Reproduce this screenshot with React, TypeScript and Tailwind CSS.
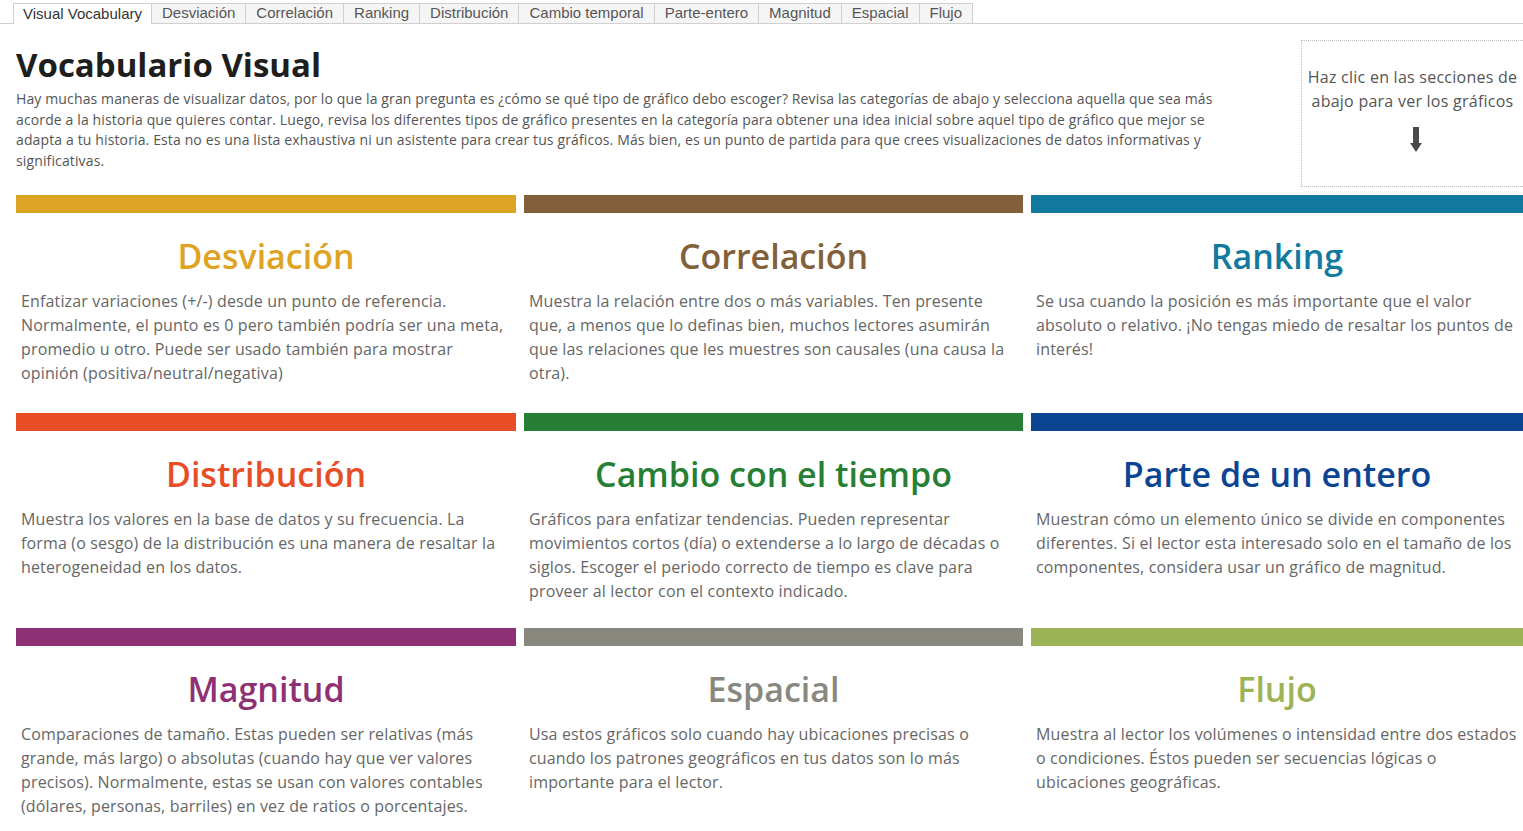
const tabs = [
  'Visual Vocabulary',
  'Desviación',
  'Correlación',
  'Ranking',
  'Distribución',
  'Cambio temporal',
  'Parte-entero',
  'Magnitud',
  'Espacial',
  'Flujo',
];

type Category = {
  title: string;
  bar: string;
  text: string;
  body: string;
};

const categories: Category[] = [
  {
    title: 'Desviación',
    bar: 'bg-[#dfa323]',
    text: 'text-[#dfa323]',
    body: 'Enfatizar variaciones (+/-) desde un punto de referencia. Normalmente, el punto es 0 pero también podría ser una meta, promedio u otro. Puede ser usado también para mostrar opinión (positiva/neutral/negativa)',
  },
  {
    title: 'Correlación',
    bar: 'bg-[#826039]',
    text: 'text-[#826039]',
    body: 'Muestra la relación entre dos o más variables. Ten presente que, a menos que lo definas bien, muchos lectores asumirán que las relaciones que les muestres son causales (una causa la otra).',
  },
  {
    title: 'Ranking',
    bar: 'bg-[#117a9e]',
    text: 'text-[#117a9e]',
    body: 'Se usa cuando la posición es más importante que el valor absoluto o relativo. ¡No tengas miedo de resaltar los puntos de interés!',
  },
  {
    title: 'Distribución',
    bar: 'bg-[#e84e26]',
    text: 'text-[#e84e26]',
    body: 'Muestra los valores en la base de datos y su frecuencia. La forma (o sesgo) de la distribución es una manera de resaltar la heterogeneidad en los datos.',
  },
  {
    title: 'Cambio con el tiempo',
    bar: 'bg-[#267f34]',
    text: 'text-[#267f34]',
    body: 'Gráficos para enfatizar tendencias. Pueden representar movimientos cortos (día) o extenderse a lo largo de décadas o siglos. Escoger el periodo correcto de tiempo es clave para proveer al lector con el contexto indicado.',
  },
  {
    title: 'Parte de un entero',
    bar: 'bg-[#0b4592]',
    text: 'text-[#0b4592]',
    body: 'Muestran cómo un elemento único se divide en componentes diferentes. Si el lector esta interesado solo en el tamaño de los componentes, considera usar un gráfico de magnitud.',
  },
  {
    title: 'Magnitud',
    bar: 'bg-[#8e3174]',
    text: 'text-[#8e3174]',
    body: 'Comparaciones de tamaño. Estas pueden ser relativas (más grande, más largo) o absolutas (cuando hay que ver valores precisos). Normalmente, estas se usan con valores contables (dólares, personas, barriles) en vez de ratios o porcentajes.',
  },
  {
    title: 'Espacial',
    bar: 'bg-[#88887e]',
    text: 'text-[#88887e]',
    body: 'Usa estos gráficos solo cuando hay ubicaciones precisas o cuando los patrones geográficos en tus datos son lo más importante para el lector.',
  },
  {
    title: 'Flujo',
    bar: 'bg-[#9cb356]',
    text: 'text-[#9cb356]',
    body: 'Muestra al lector los volúmenes o intensidad entre dos estados o condiciones. Éstos pueden ser secuencias lógicas o ubicaciones geográficas.',
  },
];

function DownArrow() {
  return (
    <svg width="12" height="26" viewBox="0 0 12 26" className="fill-[#4a4a4a]">
      <rect x="3" y="0" width="6" height="17" />
      <polygon points="0,16 12,16 6,25" />
    </svg>
  );
}

export default function App() {
  return (
    <div className="w-[1523px] h-[831px] overflow-hidden bg-white font-['Open_Sans',sans-serif]">
      <div className="mt-[3px] h-[21px] flex pl-[13px] border-b border-[#d0d0d0] font-['Liberation_Sans',Arial,sans-serif] text-[15px]">
        {tabs.map((tab, i) => (
          <div
            key={tab}
            className={
              i === 0
                ? 'px-[9px] h-[21px] flex items-center bg-white border-t border-l border-r border-[#d0d0d0] text-[#333] -mb-px'
                : 'px-[10px] h-[20px] flex items-center bg-[#f5f5f5] border-t border-r border-[#d0d0d0] text-[#555]'
            }
          >
            {tab}
          </div>
        ))}
      </div>

      <div className="flex pl-[16px] mt-[16px]">
        <div className="w-[1206px] pt-[5px]">
          <h1 className="text-[33px] leading-[40px] font-bold text-[#1e1e1e]">Vocabulario Visual</h1>
          <p className="text-[14px] leading-[20.7px] tracking-[0.13px] text-[#555] mt-[4px]">
            Hay muchas maneras de visualizar datos, por lo que la gran pregunta es ¿cómo se qué tipo de gráfico debo
            escoger? Revisa las categorías de abajo y selecciona aquella que sea más acorde a la historia que quieres
            contar. Luego, revisa los diferentes tipos de gráfico presentes en la categoría para obtener una idea
            inicial sobre aquel tipo de gráfico que mejor se adapta a tu historia. Esta no es una lista exhaustiva ni
            un asistente para crear tus gráficos. Más bien, es un punto de partida para que crees visualizaciones de
            datos informativas y significativas.
          </p>
        </div>
        <div className="ml-auto w-[222px] h-[147px] border border-dotted border-[#bdbdbd] border-r-0 flex flex-col items-center pt-[24px]">
          <p className="text-[16px] leading-[24px] tracking-[0.25px] text-[#555] text-center">
            Haz clic en las secciones de
            <br />
            abajo para ver los gráficos
          </p>
          <div className="mt-[14px] ml-[6px]">
            <DownArrow />
          </div>
        </div>
      </div>

      <div className="grid grid-cols-[500px_499px_492px] grid-rows-[218px_215px_203px] gap-x-[8px] pl-[16px] mt-[8px]">
        {categories.map((c) => (
          <div key={c.title} className="flex flex-col">
            <div className={`h-[18px] ${c.bar}`} />
            <h2 className={`mt-[23px] text-[34px] leading-[40px] font-semibold text-center ${c.text}`}>{c.title}</h2>
            <p className="mt-[13px] px-[5px] text-[16px] leading-[24px] tracking-[0.15px] text-[#666]">{c.body}</p>
          </div>
        ))}
      </div>
    </div>
  );
}
